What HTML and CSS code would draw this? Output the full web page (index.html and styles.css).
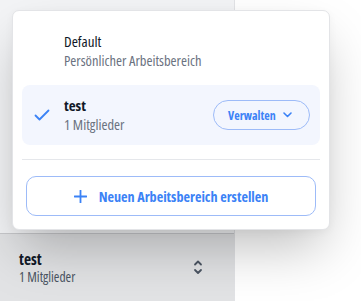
FILE: index.html
```html
<!DOCTYPE html>
<html lang="de">
<head>
  <meta charset="UTF-8" />
  <meta name="viewport" content="width=device-width, initial-scale=1.0"/>
  <title>Arbeitsbereiche</title>
  <link rel="stylesheet" href="styles.css">
</head>
<body>
  <div class="app">
    <aside class="sidebar">
      <div class="sidebar-body"></div>
      <button class="switcher">
        <span class="ws-text">
          <span class="ws-name">test</span>
          <span class="ws-meta">1 Mitglieder</span>
        </span>
        <svg class="updown" width="10" height="17" viewBox="0 0 10 17" fill="none" stroke="currentColor" stroke-width="1.8" stroke-linecap="round" stroke-linejoin="round">
          <path d="M2 5.5 L5 2.5 L8 5.5"/>
          <path d="M2 11 L5 14 L8 11"/>
        </svg>
      </button>
    </aside>
    <main class="content"></main>

    <!-- Popover mit Arbeitsbereichen -->
    <div class="popover">
      <div class="ws-item">
        <span class="check"></span>
        <span class="ws-text">
          <span class="item-name">Default</span>
          <span class="item-meta">Persönlicher Arbeitsbereich</span>
        </span>
      </div>

      <div class="ws-item active">
        <span class="check">
          <svg width="16" height="12" viewBox="0 0 16 12" fill="none" stroke="#3b82f6" stroke-width="1.8" stroke-linecap="round" stroke-linejoin="round">
            <path d="M1.5 6.5 L5.5 10.5 L14.5 1.5"/>
          </svg>
        </span>
        <span class="ws-text">
          <span class="item-name bold">test</span>
          <span class="item-meta">1 Mitglieder</span>
        </span>
        <button class="manage">
          Verwalten
          <svg width="9" height="6" viewBox="0 0 9 6" fill="none" stroke="currentColor" stroke-width="1.6" stroke-linecap="round" stroke-linejoin="round">
            <path d="M1 1 L4.5 4.5 L8 1"/>
          </svg>
        </button>
      </div>

      <div class="divider"></div>

      <button class="create">
        <svg width="13" height="13" viewBox="0 0 13 13" fill="none" stroke="currentColor" stroke-width="1.8" stroke-linecap="round">
          <path d="M6.5 0.5 V12.5 M0.5 6.5 H12.5"/>
        </svg>
        Neuen Arbeitsbereich erstellen
      </button>
    </div>
  </div>
</body>
</html>
```
FILE: styles.css
```css
body {
  margin: 0;
  font-family: "Open Sans", "DejaVu Sans", sans-serif;
  font-stretch: 75%;
  background: #fff;
}

.app {
  position: relative;
  display: flex;
  height: 100vh;
  overflow: hidden;
}

.sidebar {
  width: 234px;
  background: #f3f4f6;
  border-right: 1px solid #e2e3e6;
  display: flex;
  flex-direction: column;
}

.sidebar-body {
  flex: 1;
}

.content {
  flex: 1;
  background: #fff;
}

button {
  font-family: inherit;
  font-stretch: inherit;
  cursor: pointer;
}

.switcher {
  height: 68px;
  border: none;
  border-top: 1px solid #c9cacd;
  background: #e2e3e5;
  display: flex;
  align-items: center;
  justify-content: space-between;
  padding: 0 31px 0 19px;
  text-align: left;
}

.ws-text {
  display: flex;
  flex-direction: column;
}

.ws-name {
  font-size: 15.5px;
  font-weight: 700;
  color: #111827;
  line-height: 18px;
}

.ws-meta {
  font-size: 13.5px;
  color: #4b5563;
  line-height: 18px;
}

.updown {
  color: #4b5563;
}

.popover {
  position: absolute;
  left: 12px;
  top: 10px;
  width: 318px;
  height: 220px;
  box-sizing: border-box;
  background: #fff;
  border: 1px solid #e3e4e7;
  border-radius: 7px;
  padding: 10px 9px;
  box-shadow: 0 25px 50px -8px rgba(0,0,0,0.25), 0 2px 8px rgba(0,0,0,0.04);
  display: flex;
  flex-direction: column;
}

.ws-item {
  height: 60px;
  display: flex;
  align-items: center;
  padding: 0 10px 0 12px;
  border-radius: 8px;
  margin-bottom: 4px;
}

.ws-item.active {
  background: #f3f6fe;
}

.check {
  width: 16px;
  height: 12px;
  margin-right: 14px;
  display: flex;
}

.ws-item .ws-text {
  flex: 1;
  gap: 2px;
}

.item-name {
  font-size: 15px;
  font-weight: 500;
  color: #111827;
  line-height: 18px;
}

.item-name.bold {
  font-weight: 700;
}

.item-meta {
  font-size: 14.5px;
  color: #6b7280;
  line-height: 18px;
}

.manage {
  height: 30px;
  width: 97px;
  border: 1px solid #9dbbf8;
  border-radius: 15px;
  background: transparent;
  color: #3b82f6;
  font-size: 12px;
  font-weight: 700;
  display: flex;
  align-items: center;
  justify-content: space-between;
  padding: 0 17px 0 14px;
}

.divider {
  height: 1px;
  background: #e5e7eb;
  margin: 10px 0 16px;
}

.create {
  margin: 0 4px;
  height: 40px;
  border: 1px solid #9dbbf8;
  border-radius: 10px;
  background: #fff;
  color: #3b82f6;
  font-size: 14.2px;
  font-weight: 700;
  display: flex;
  align-items: center;
  justify-content: center;
  gap: 12px;
}
```
